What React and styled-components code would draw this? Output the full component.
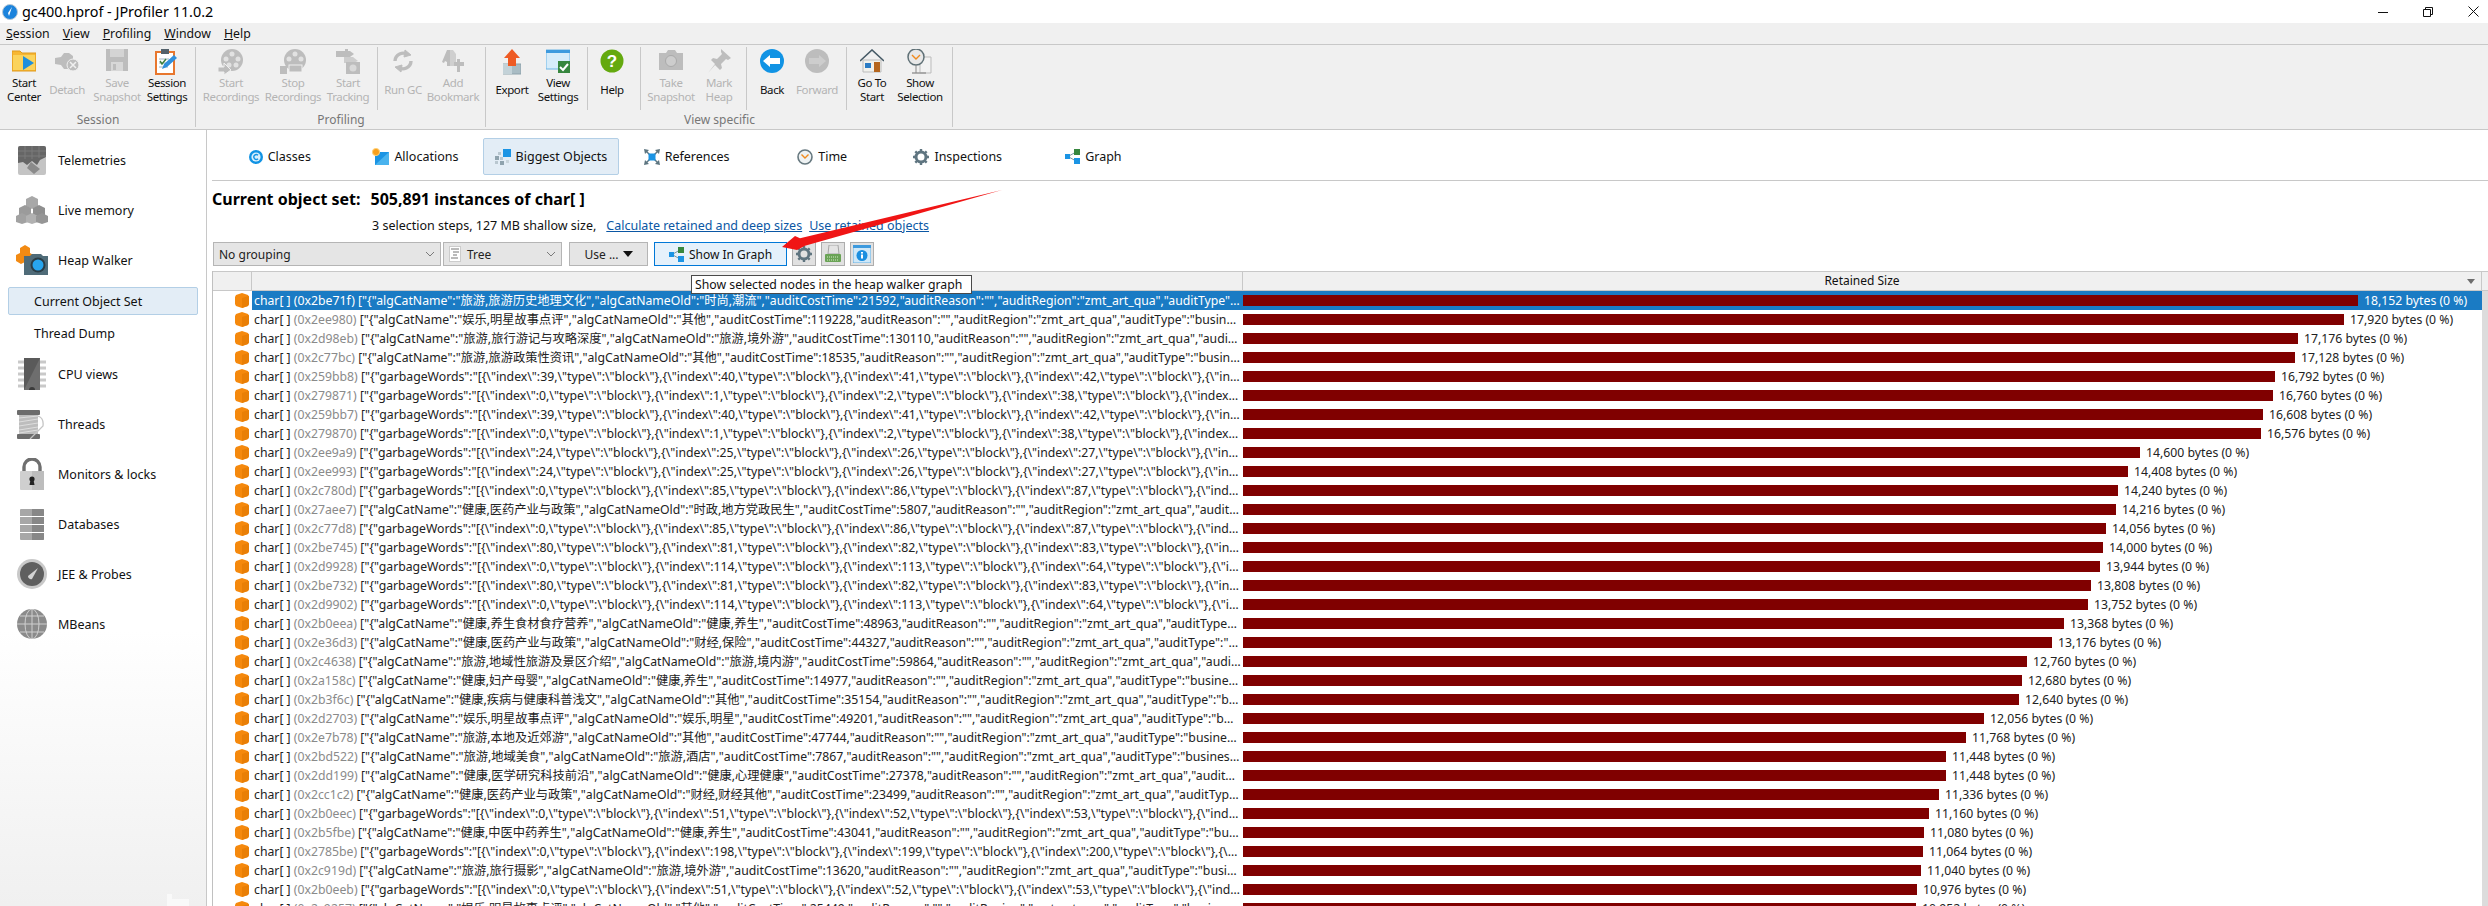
import React from 'react';
import styled, { createGlobalStyle } from 'styled-components';

const uiFont = `"Noto Sans", "Noto Sans CJK SC", sans-serif`;

const Global = createGlobalStyle`
  html, body {
    margin: 0;
    padding: 0;
    background: #fff;
    overflow: hidden;
  }
  * {
    box-sizing: border-box;
  }
`;

const Window = styled.div`
  position: relative;
  width: 2488px;
  height: 906px;
  overflow: hidden;
  display: flex;
  flex-direction: column;
  font-family: ${uiFont};
  font-size: 12px;
  color: #111;
`;

const TitleBar = styled.div`
  height: 23px;
  display: flex;
  align-items: center;
  padding-left: 2px;
  background: #fff;
`;

const TitleText = styled.span`
  margin-left: 4px;
  font-size: 14.4px;
  color: #000;
`;

const WindowControls = styled.div`
  margin-left: auto;
  display: flex;
  align-items: center;
  gap: 35px;
  padding-right: 9px;
`;

const MenuBar = styled.div`
  height: 22px;
  display: flex;
  align-items: center;
  gap: 13px;
  padding-left: 6px;
  background: #f0f0f0;
  border-bottom: 1px solid #c8c8c8;
  font-size: 12.3px;
`;

const MenuItem = styled.span`
  &::first-letter {
    text-decoration: underline;
  }
`;

const Toolbar = styled.div`
  height: 85px;
  display: flex;
  background: #f0f0f0;
  border-bottom: 1px solid #c8c8c8;
`;

const Group = styled.div`
  width: ${(p) => p.$w}px;
  height: 84px;
  padding-left: ${(p) => p.$pad || 0}px;
  display: flex;
  flex-direction: column;
  position: relative;
  &::after {
    content: '';
    position: absolute;
    right: 0;
    top: 2px;
    bottom: 2px;
    width: 1px;
    background: #c8c8c8;
  }
`;

const GroupRow = styled.div`
  height: 65px;
  padding-top: 2px;
  display: flex;
`;

const GroupLabel = styled.div`
  height: 19px;
  line-height: 19px;
  text-align: center;
  color: #777;
  margin-left: ${(p) => -(p.$pad || 0)}px;
`;

const InnerSep = styled.div`
  width: 1px;
  height: 63px;
  background: #c8c8c8;
  margin-left: ${(p) => p.$l}px;
  margin-right: ${(p) => p.$r}px;
`;

const ToolButton = styled.div`
  width: ${(p) => p.$w}px;
  display: flex;
  flex-direction: column;
  align-items: center;
  color: ${(p) => (p.$off ? '#b4b4b4' : '#111')};
`;

const ToolIcon = styled.div`
  height: 29px;
  padding-top: 2px;
  display: flex;
  justify-content: center;
`;

const ToolText = styled.div`
  height: 28px;
  display: flex;
  align-items: center;
  text-align: center;
  font-size: 11.5px;
  line-height: 14px;
  white-space: pre;
  letter-spacing: -0.4px;
`;

const Body = styled.div`
  flex: 1;
  display: flex;
  min-height: 0;
`;

const Sidebar = styled.div`
  position: relative;
  width: 207px;
  flex: none;
  padding-top: 5px;
  border-right: 1px solid #c8c8c8;
  background: linear-gradient(to bottom, #fff 0, #fff 500px, #f0f0f0 776px);
`;

const SideMark = styled.svg`
  position: absolute;
  left: 167px;
  bottom: 0;
`;

const SideItem = styled.div`
  height: 50px;
  display: flex;
  align-items: center;
  padding-left: 16px;
  gap: 10px;
  font-size: 12.5px;
`;

const SideIcon = styled.div`
  width: 32px;
  display: flex;
  justify-content: center;
`;

const SubList = styled.div`
  display: flex;
  flex-direction: column;
  gap: 4px;
  padding: 2px 0;
`;

const SubItem = styled.div`
  width: 190px;
  height: 28px;
  margin-left: 8px;
  padding-left: 25px;
  display: flex;
  align-items: center;
  font-size: 12.5px;
  border: 1px solid ${(p) => (p.$active ? '#b3cfe6' : 'transparent')};
  border-radius: 2px;
  background: ${(p) => (p.$active ? '#e3edf6' : 'transparent')};
`;

const Main = styled.div`
  flex: 1;
  min-width: 0;
  margin-left: 5px;
  display: flex;
  flex-direction: column;
`;

const TabBar = styled.div`
  height: 51px;
  padding-top: 8px;
  display: flex;
  border-bottom: 1px solid #c8c8c8;
`;

const Tab = styled.div`
  width: 135.6px;
  height: 37px;
  display: flex;
  align-items: center;
  justify-content: center;
  gap: 5px;
  font-size: 12.5px;
  border: 1px solid ${(p) => (p.$active ? '#b3cfe6' : 'transparent')};
  border-radius: 2px;
  background: ${(p) => (p.$active ? '#e3edf6' : 'transparent')};
`;

const Heading = styled.div`
  height: 22px;
  margin-top: 7px;
  display: flex;
  align-items: center;
  font-size: 16px;
  font-weight: 700;
  color: #000;
  gap: 10px;
`;

const SubLine = styled.div`
  height: 20px;
  margin-top: 5px;
  margin-left: 160px;
  display: flex;
  align-items: center;
  font-size: 12.5px;
`;

const DocLink = styled.span`
  color: #0b57a4;
  text-decoration: underline;
  margin-left: ${(p) => p.$l}px;
`;

const Controls = styled.div`
  height: 24px;
  margin-top: 7px;
  padding-left: 1px;
  display: flex;
  align-items: stretch;
`;

const Select = styled.div`
  width: ${(p) => p.$w}px;
  margin-right: ${(p) => p.$r}px;
  padding: 0 5px;
  display: flex;
  align-items: center;
  gap: 6px;
  background: #e5e5e5;
  border: 1px solid #b5b5b5;
  color: #222;
  & > svg:last-child {
    margin-left: auto;
  }
`;

const GraphButton = styled.div`
  width: 133px;
  margin-right: 5px;
  display: flex;
  align-items: center;
  justify-content: center;
  gap: 5px;
  background: #e5f1fb;
  border: 1px solid #0078d7;
`;

const IconButton = styled.div`
  width: 24px;
  margin-right: 5px;
  display: flex;
  align-items: center;
  justify-content: center;
  background: #e1e1e1;
  border: 1px solid #adadad;
`;

const UseButton = styled(Select)`
  justify-content: center;
  gap: 4px;
  & > svg:last-child {
    margin-left: 0;
  }
`;

const Table = styled.div`
  flex: 1;
  margin-top: 5px;
  border-left: 1px solid #c0c0c0;
  min-height: 0;
`;

const HeaderRow = styled.div`
  height: 20px;
  display: flex;
  background: #f0f0f0;
  border-top: 1px solid #c8c8c8;
  border-bottom: 1px solid #c8c8c8;
`;

const HeaderCell = styled.div`
  width: ${(p) => p.$w}px;
  flex: none;
  text-align: center;
  line-height: 18px;
  border-right: 1px solid #c8c8c8;
  display: flex;
  align-items: center;
  justify-content: center;
  position: relative;
`;

const SortMark = styled.span`
  position: absolute;
  right: 6px;
  top: 7px;
  width: 0;
  height: 0;
  border-left: 4px solid transparent;
  border-right: 4px solid transparent;
  border-top: 5px solid #6d6d6d;
`;

const Row = styled.div`
  height: 19px;
  display: flex;
  font-size: 12.25px;
  color: ${(p) => (p.$sel ? '#fff' : '#222')};
`;

const Gutter = styled.div`
  width: 39px;
  flex: none;
  padding-left: 22px;
  display: flex;
  align-items: center;
`;

const NameCell = styled.div`
  width: 991px;
  flex: none;
  padding: 0 2px;
  line-height: 19px;
  white-space: nowrap;
  overflow: hidden;
  text-overflow: ellipsis;
  background: ${(p) => (p.$sel ? '#1a7bc4' : 'transparent')};
`;

const Address = styled.span`
  color: ${(p) => (p.$sel ? '#fff' : '#8a8a8a')};
`;

const SizeCell = styled.div`
  width: 1239px;
  flex: none;
  display: flex;
  align-items: center;
  gap: 6px;
  background: ${(p) => (p.$sel ? '#1a7bc4' : 'transparent')};
`;

const Bar = styled.div`
  height: 11px;
  background: #800000;
`;

const Scroll = styled.div`
  width: 6px;
  background: #dcdcdc;
`;

const TableBody = styled.div`
  display: flex;
`;

const Rows = styled.div`
  flex: none;
`;

const Tooltip = styled.div`
  position: absolute;
  left: 691px;
  top: 275px;
  width: 281px;
  height: 19px;
  padding-left: 3px;
  font-size: 12.25px;
  line-height: 17px;
  background: #fff;
  border: 1px solid #4a4a4a;
  color: #111;
  white-space: nowrap;
`;

const ArrowLayer = styled.svg`
  position: absolute;
  left: 0;
  top: 0;
  pointer-events: none;
`;

const GRAY = '#bdbdbd';

const icons = {
  startCenter: (
    <svg width="24" height="24" viewBox="0 0 24 24">
      <path d="M0 2h8l2 2h14v18H0z" fill="#f7b733" stroke="#e09a1c" />
      <rect x="1" y="6" width="22" height="15" fill="#fbd35c" />
      <path d="M11 7l11 7-11 7z" fill="#1f8fdc" />
    </svg>
  ),
  detach: (
    <svg width="26" height="24" viewBox="0 0 26 24">
      <path d="M1 9l6-1 3-4h5l4 3v10l-5 3h-4l-3-4-6-1z" fill={GRAY} />
      <circle cx="19" cy="16" r="6" fill={GRAY} stroke="#f0f0f0" />
      <path d="M16 13l6 6M22 13l-6 6" stroke="#f0f0f0" strokeWidth="1.5" />
    </svg>
  ),
  save: (
    <svg width="22" height="22" viewBox="0 0 22 22">
      <path d="M0 0h22v22H0z" fill={GRAY} />
      <rect x="4" y="0" width="14" height="8" fill="#d4d4d4" />
      <rect x="5" y="13" width="12" height="9" fill="#d8d8d8" />
      <rect x="7" y="15" width="3" height="6" fill={GRAY} />
    </svg>
  ),
  sessionSettings: (
    <svg width="24" height="26" viewBox="0 0 24 26">
      <rect x="1" y="3" width="18" height="22" fill="#fff" stroke="#e8772e" strokeWidth="2" />
      <rect x="6" y="0" width="8" height="5" fill="#53616b" />
      <path d="M4 10h10M4 14h7M4 18h9" stroke="#9eb3c2" />
      <path d="M7 20l2-5 10-9 3 3-10 9z" fill="#2f8fdc" />
      <path d="M5 12l2 3 4-5" stroke="#3c7f3c" fill="none" strokeWidth="1.5" />
    </svg>
  ),
  reelStart: (
    <svg width="26" height="26" viewBox="0 0 26 26">
      <circle cx="14" cy="11" r="11" fill={GRAY} />
      <circle cx="14" cy="5" r="2.5" fill="#e2e2e2" />
      <circle cx="8" cy="10" r="2.5" fill="#e2e2e2" />
      <circle cx="20" cy="10" r="2.5" fill="#e2e2e2" />
      <circle cx="11" cy="16" r="2.5" fill="#e2e2e2" />
      <circle cx="18" cy="16" r="2.5" fill="#e2e2e2" />
      <path d="M0 18h6v-4l7 7-7 5v-3H0z" fill={GRAY} stroke="#f0f0f0" />
    </svg>
  ),
  reelStop: (
    <svg width="26" height="26" viewBox="0 0 26 26">
      <circle cx="15" cy="11" r="11" fill={GRAY} />
      <circle cx="15" cy="5" r="2.5" fill="#e2e2e2" />
      <circle cx="9" cy="10" r="2.5" fill="#e2e2e2" />
      <circle cx="21" cy="10" r="2.5" fill="#e2e2e2" />
      <rect x="0" y="17" width="7" height="8" fill={GRAY} />
      <rect x="9" y="16" width="13" height="7" fill={GRAY} stroke="#f0f0f0" />
    </svg>
  ),
  tracking: (
    <svg width="24" height="26" viewBox="0 0 24 26">
      <path d="M0 2h14l4 3-4 3H0z" fill={GRAY} />
      <rect x="9" y="0" width="3" height="10" fill={GRAY} />
      <path d="M8 8h9l5 4-5 2H8z" fill="#cdcdcd" />
      <rect x="10" y="13" width="14" height="12" fill={GRAY} />
      <circle cx="17" cy="19" r="3.5" fill="#d9d9d9" />
    </svg>
  ),
  gc: (
    <svg width="24" height="24" viewBox="0 0 24 24" fill="none" stroke={GRAY} strokeWidth="3.4">
      <path d="M4 12a8 8 0 0 1 13-6" />
      <path d="M20 12a8 8 0 0 1-13 6" />
      <path d="M14 1l6 5-7 2z" fill={GRAY} strokeWidth="1" />
      <path d="M10 23l-6-5 7-2z" fill={GRAY} strokeWidth="1" />
    </svg>
  ),
  bookmark: (
    <svg width="24" height="24" viewBox="0 0 24 24">
      <path d="M1 13l5-12h3l3 3v13H6v-4L4 12l-1 2z" fill={GRAY} />
      <path d="M9 1h3l3 4v12H9z" fill="#cfcfcf" />
      <path d="M13 13h3v-3h3v3h4v4h-4v6h-3v-6h-3z" fill={GRAY} />
    </svg>
  ),
  exportUp: (
    <svg width="18" height="26" viewBox="0 0 18 26">
      <rect x="0" y="15" width="18" height="10" fill="#a9bcc4" stroke="#8ea3ac" />
      <rect x="0" y="15" width="9" height="10" fill="#c3d2d8" />
      <path d="M9 0l8 9h-4v8H5V9H1z" fill="#ee5b24" />
    </svg>
  ),
  viewSettings: (
    <svg width="24" height="24" viewBox="0 0 24 24">
      <rect x="0" y="1" width="24" height="19" fill="#d6ecfa" stroke="#6ab4e4" />
      <rect x="0" y="1" width="24" height="3" fill="#3d9ade" />
      <rect x="12" y="12" width="12" height="12" fill="#37873f" />
      <path d="M14 18l3 3 5-6" stroke="#fff" strokeWidth="2" fill="none" />
    </svg>
  ),
  help: (
    <svg width="24" height="24" viewBox="0 0 24 24">
      <circle cx="12" cy="12" r="11.5" fill="#64a90f" />
      <text x="12" y="18" textAnchor="middle" fontSize="17" fontWeight="700" fill="#fff" fontFamily="Liberation Sans">?</text>
    </svg>
  ),
  snapshot: (
    <svg width="24" height="22" viewBox="0 0 24 22">
      <path d="M0 4h7l2-3h7l2 3h6v17H0z" fill={GRAY} />
      <circle cx="12" cy="12" r="5.5" fill="#cdcdcd" stroke="#aaa" />
    </svg>
  ),
  pin: (
    <svg width="24" height="24" viewBox="0 0 24 24">
      <path d="M14 0l10 9-3 2-2-1-5 5 1 4-2 2-5-5-7 8 7-9-4-4 2-2 4 1 5-5-1-2z" fill={GRAY} />
    </svg>
  ),
  back: (
    <svg width="24" height="24" viewBox="0 0 24 24">
      <circle cx="12" cy="12" r="12" fill="#1193e4" />
      <path d="M3 12l7-6v3h10v6H10v3z" fill="#fff" />
    </svg>
  ),
  forward: (
    <svg width="24" height="24" viewBox="0 0 24 24">
      <circle cx="12" cy="12" r="12" fill={GRAY} />
      <path d="M21 12l-7-6v3H4v6h10v3z" fill="#cdcdcd" />
    </svg>
  ),
  home: (
    <svg width="24" height="24" viewBox="0 0 24 24">
      <path d="M3 11h18v12H3z" fill="#f1f1ec" stroke="#bbb" />
      <path d="M0 12L12 1l12 11" fill="none" stroke="#465a66" strokeWidth="1.6" />
      <rect x="14" y="13" width="6" height="10" fill="#b5651d" />
      <rect x="5" y="14" width="6" height="5" fill="#2b7bc4" />
    </svg>
  ),
  selection: (
    <svg width="26" height="26" viewBox="0 0 26 26">
      <path d="M13 8h11v16H13z" fill="#f2f2f2" stroke="#bbb" />
      <path d="M5 24h14" stroke="#9a9a9a" strokeWidth="1.5" />
      <circle cx="9" cy="8" r="8" fill="#e8e8e8" stroke="#5f7076" strokeWidth="1.5" />
      <path d="M5 6l4 4 4-4" fill="none" stroke="#f08a1d" strokeWidth="1.4" />
      <path d="M9 16v8" stroke="#8a8a8a" />
    </svg>
  ),
  telemetries: (
    <svg width="28" height="29" viewBox="0 0 28 29">
      <rect width="28" height="29" rx="2" fill="#c4c4c4" />
      <path d="M0 2a2 2 0 0 1 2-2h24a2 2 0 0 1 2 2v9l-6 3-3 5-5-4-5 4-4-3-5 1z" fill="#666" />
      <path d="M0 5h28M0 10h28M7 0v13M14 0v13M21 0v12" stroke="#7b7b7b" />
      <path d="M13 16l9 7-6 5-7-6z" fill="#8a8a8a" />
    </svg>
  ),
  live: (
    <svg width="32" height="28" viewBox="0 0 32 28">
      <path d="M16 0l6 3v7l-6 3-6-3V3z" fill="#a8a8a8" />
      <path d="M9 9l6 3v7l-6 3-6-3v-7z" fill="#9b9b9b" />
      <path d="M23 9l6 3v7l-6 3-6-3v-7z" fill="#8f8f8f" />
      <path d="M6 17l6 3v6l-6 2-6-2v-6z" fill="#a2a2a2" />
      <path d="M16 17l6 3v6l-6 2-6-2v-6z" fill="#b1b1b1" />
      <path d="M26 17l6 3v6l-6 2-6-2v-6z" fill="#969696" />
    </svg>
  ),
  heap: (
    <svg width="32" height="30" viewBox="0 0 32 30">
      <path d="M9 0l5 3v5l5 3v6l-5 3-5-3-4 2-5-3v-6l4-2V3z" fill="#f28a13" />
      <path d="M8 11h6l2-2h9l2 2h5v19H8z" fill="#4f6b78" />
      <circle cx="22" cy="20" r="7.5" fill="#2b3d46" />
      <circle cx="22" cy="20" r="5.5" fill="#28a5ee" />
    </svg>
  ),
  cpu: (
    <svg width="28" height="32" viewBox="0 0 28 32">
      <path d="M0 4h28M0 10h28M0 16h28M0 22h28M0 28h28" stroke="#c9c9c9" strokeWidth="3" />
      <rect x="6" y="0" width="16" height="32" fill="#5a5a5a" />
      <path d="M22 0v32H6z" fill="#6e6e6e" />
      <path d="M11 32a3 3 0 0 1 6 0z" fill="#3b3b3b" />
    </svg>
  ),
  threads: (
    <svg width="30" height="29" viewBox="0 0 30 29">
      <rect x="0" y="0" width="23" height="5" rx="1" fill="#6c6c6c" />
      <rect x="0" y="24" width="23" height="5" rx="1" fill="#6c6c6c" />
      <rect x="2" y="5" width="19" height="19" fill="#bdbdbd" />
      <path d="M2 8l19-2M2 12l19-3M2 16l19-3M2 20l19-3M2 23l19-3" stroke="#dedede" />
      <path d="M21 6q6 2 5 10L13 29" fill="none" stroke="#c5c5c5" strokeWidth="1.3" />
    </svg>
  ),
  lock: (
    <svg width="26" height="32" viewBox="0 0 26 32">
      <path d="M5 14V9a8 8 0 0 1 16 0v5" fill="none" stroke="#6f6f6f" strokeWidth="3.4" />
      <rect x="1" y="13" width="24" height="19" rx="1" fill="#cfcfcf" />
      <path d="M13 13h12v19H13z" fill="#bdbdbd" />
      <circle cx="13" cy="21" r="2.6" fill="#222" />
      <path d="M11.5 22h3l1 5h-5z" fill="#222" />
    </svg>
  ),
  db: (
    <svg width="24" height="31" viewBox="0 0 24 31">
      <path d="M0 1a1 1 0 0 1 1-1h22a1 1 0 0 1 1 1v6H0zM0 8h24v7H0zM0 16h24v7H0zM0 24h24v6a1 1 0 0 1-1 1H1a1 1 0 0 1-1-1z" fill="#a7a7a7" />
      <path d="M12 0h11a1 1 0 0 1 1 1v6H12zM12 8h12v7H12zM12 16h12v7H12zM12 24h12v6a1 1 0 0 1-1 1H12z" fill="#878787" />
    </svg>
  ),
  gauge: (
    <svg width="30" height="30" viewBox="0 0 30 30">
      <circle cx="15" cy="15" r="15" fill="#c9c9c9" />
      <circle cx="15" cy="15" r="12" fill="#5f5f5f" />
      <path d="M11 17l10-8-6 11a3 3 0 0 1-4-3z" fill="#d2d2d2" />
    </svg>
  ),
  globe: (
    <svg width="30" height="30" viewBox="0 0 30 30" fill="none" stroke="#cfcfcf">
      <circle cx="15" cy="15" r="15" fill="#8b8b8b" stroke="none" />
      <ellipse cx="15" cy="15" rx="7" ry="15" />
      <path d="M15 0v30M0 15h30M3 7h24M3 23h24" />
    </svg>
  ),
  classes: (
    <svg width="14" height="14" viewBox="0 0 14 14">
      <circle cx="7" cy="7" r="7" fill="#1193e4" />
      <circle cx="7" cy="7" r="4.6" fill="#d9effc" />
      <path d="M9 5.3a2.4 2.4 0 1 0 0 3.4" fill="none" stroke="#1193e4" strokeWidth="1.4" />
    </svg>
  ),
  allocations: (
    <svg width="17" height="17" viewBox="0 0 17 17">
      <rect x="3" y="4" width="14" height="13" fill="#1b94e4" />
      <path d="M17 4v13H3z" fill="#49b3ee" />
      <circle cx="4" cy="4" r="3.6" fill="#f8a01e" stroke="#ffd27a" />
    </svg>
  ),
  biggest: (
    <svg width="16" height="16" viewBox="0 0 16 16">
      <rect x="8" y="0" width="8" height="8" fill="#1b94e4" />
      <rect x="3" y="3" width="3" height="3" fill="#b9c7d0" />
      <rect x="0" y="7" width="4" height="4" fill="#8fa3ae" />
      <rect x="5" y="8" width="3" height="3" fill="#b9c7d0" />
      <rect x="0" y="12" width="3" height="3" fill="#b9c7d0" />
      <rect x="5" y="12" width="4" height="4" fill="#8fa3ae" />
      <rect x="11" y="11" width="3" height="3" fill="#c9d5dc" />
    </svg>
  ),
  references: (
    <svg width="16" height="16" viewBox="0 0 16 16">
      <path d="M0 0l5 1-1.500 1.500L6 5 5 6 2.500 3.500 1 5zM16 0l-1 5-1.500-1.500L11 6l-1-1 2.500-2.500L11 1zM0 16l1-5 1.500 1.500L5 10l1 1-2.500 2.500L5 15zM16 16l-5-1 1.500-1.500L10 11l1-1 2.500 2.500L15 11z" fill="#5d7580" />
      <rect x="4.500" y="4.500" width="7" height="7" fill="#1b94e4" />
    </svg>
  ),
  time: (
    <svg width="16" height="16" viewBox="0 0 16 16">
      <circle cx="8" cy="8" r="7" fill="#eef2f3" stroke="#66787f" strokeWidth="1.6" />
      <path d="M4.500 5.500L8 9l3.500-3.500" fill="none" stroke="#f08a1d" strokeWidth="1.4" />
    </svg>
  ),
  gear: (
    <svg width="16" height="16" viewBox="0 0 16 16">
      <circle cx="8" cy="8" r="5" fill="none" stroke="#5f7580" strokeWidth="3" />
      <path d="M8 0v3M8 13v3M0 8h3M13 8h3M2.300 2.300l2.200 2.200M11.500 11.500l2.200 2.200M13.700 2.300l-2.200 2.200M4.500 11.500l-2.200 2.200" stroke="#5f7580" strokeWidth="2.400" />
    </svg>
  ),
  graph: (
    <svg width="15" height="15" viewBox="0 0 15 15">
      <path d="M3 7.500L11 3M3 7.500L11 12" stroke="#7b949f" />
      <rect x="0" y="5" width="5" height="5" fill="#1b94e4" />
      <rect x="9" y="0" width="6" height="6" fill="#37873f" />
      <rect x="9" y="9" width="6" height="6" fill="#1b94e4" />
    </svg>
  ),
  print: (
    <svg width="18" height="18" viewBox="0 0 18 18">
      <path d="M5 0h9l1 9H4z" fill="#e4e4e4" stroke="#a5a5a5" />
      <rect x="1" y="9" width="16" height="8" rx="1" fill="#6aa356" />
      <path d="M3 12h12M3 15h12" stroke="#d3ecc6" strokeDasharray="1 1" />
    </svg>
  ),
  info: (
    <svg width="18" height="18" viewBox="0 0 18 18">
      <rect x="0" y="0" width="18" height="18" fill="#cfe8f8" stroke="#63aee0" />
      <rect x="0" y="0" width="18" height="3" fill="#3d9ade" />
      <circle cx="9" cy="10.500" r="5.500" fill="#1b8fe0" />
      <rect x="8" y="9.500" width="2" height="4" fill="#fff" />
      <rect x="8" y="7" width="2" height="1.600" fill="#fff" />
    </svg>
  ),
};

const ObjectIcon = () => (
  <svg width="14" height="15" viewBox="0 0 14 15">
    <path d="M7 0l6 2 1 2v7l-1 2-6 2-6-2-1-2V4l1-2z" fill="#f5890d" />
    <path d="M7 5l7-2v8l-1 2-6 2z" fill="#e97f06" />
  </svg>
);

const Chevron = () => (
  <svg width="10" height="6" viewBox="0 0 10 6" fill="none" stroke="#7a7a7a">
    <path d="M1 1l4 4 4-4" />
  </svg>
);

const Caret = () => (
  <svg width="10" height="6" viewBox="0 0 10 6">
    <path d="M0 0h10L5 6z" fill="#111" />
  </svg>
);

const TreeGlyph = () => (
  <svg width="12" height="16" viewBox="0 0 12 16" fill="none" stroke="#777">
    <rect x="0.500" y="0.500" width="11" height="15" fill="#fff" stroke="#ccc" />
    <path d="M2 3h8M4 6h6M4 9h4M2 12h7" />
  </svg>
);

const groups = [
  {
    label: 'Session',
    w: 196,
    pad: 1,
    parts: [
      { w: 46, text: 'Start\nCenter', icon: 'startCenter' },
      { w: 40, text: 'Detach', icon: 'detach', off: true },
      { w: 60, text: 'Save\nSnapshot', icon: 'save', off: true },
      { w: 40, text: 'Session\nSettings', icon: 'sessionSettings' },
    ],
  },
  {
    label: 'Profiling',
    w: 290,
    pad: 4,
    parts: [
      { w: 62, text: 'Start\nRecordings', icon: 'reelStart', off: true },
      { w: 62, text: 'Stop\nRecordings', icon: 'reelStop', off: true },
      { w: 48, text: 'Start\nTracking', icon: 'tracking', off: true },
      { sep: [5, 2] },
      { w: 46, text: 'Run GC', icon: 'gc', off: true },
      { w: 54, text: 'Add\nBookmark', icon: 'bookmark', off: true },
    ],
  },
  {
    label: 'View specific',
    w: 467,
    pad: 0,
    parts: [
      { w: 52, text: 'Export', icon: 'exportUp' },
      { w: 40, text: 'View\nSettings', icon: 'viewSettings' },
      { sep: [9, 1] },
      { w: 46, text: 'Help', icon: 'help' },
      { sep: [5, 1] },
      { w: 58, text: 'Take\nSnapshot', icon: 'snapshot', off: true },
      { w: 38, text: 'Mark\nHeap', icon: 'pin', off: true },
      { sep: [8, 1] },
      { w: 48, text: 'Back', icon: 'back' },
      { w: 42, text: 'Forward', icon: 'forward', off: true },
      { sep: [8, 1] },
      { w: 48, text: 'Go To\nStart', icon: 'home' },
      { w: 48, text: 'Show\nSelection', icon: 'selection' },
    ],
  },
];

const sideTop = [
  ['telemetries', 'Telemetries'],
  ['live', 'Live memory'],
  ['heap', 'Heap Walker'],
];

const sideBottom = [
  ['cpu', 'CPU views'],
  ['threads', 'Threads'],
  ['lock', 'Monitors & locks'],
  ['db', 'Databases'],
  ['gauge', 'JEE & Probes'],
  ['globe', 'MBeans'],
];

const tabs = [
  ['classes', 'Classes'],
  ['allocations', 'Allocations'],
  ['biggest', 'Biggest Objects', true],
  ['references', 'References'],
  ['time', 'Time'],
  ['gear', 'Inspections'],
  ['graph', 'Graph'],
];

const alg = (cat, old, time) =>
  `["{"algCatName":"${cat}","algCatNameOld":"${old}","auditCostTime":${time},"auditReason":"","auditRegion":"zmt_art_qua","auditType":"business","auditUser":"zmt"}`;

const garbage = (a, b, c, d) =>
  `["{"garbageWords":"[` +
  [a, b, c, d, 0, 0].map((i) => `{\\"index\\":${i},\\"type\\":\\"block\\"}`).join(',');

const rows = [
  ['0x2be71f', alg('旅游,旅游历史地理文化', '时尚,潮流', 21592), 18152],
  ['0x2ee980', alg('娱乐,明星故事点评', '其他', 119228), 17920],
  ['0x2d98eb', alg('旅游,旅行游记与攻略深度', '旅游,境外游', 130110), 17176],
  ['0x2c77bc', alg('旅游,旅游政策性资讯', '其他', 18535), 17128],
  ['0x259bb8', garbage(39, 40, 41, 42), 16792],
  ['0x279871', garbage(0, 1, 2, 38), 16760],
  ['0x259bb7', garbage(39, 40, 41, 42), 16608],
  ['0x279870', garbage(0, 1, 2, 38), 16576],
  ['0x2ee9a9', garbage(24, 25, 26, 27), 14600],
  ['0x2ee993', garbage(24, 25, 26, 27), 14408],
  ['0x2c780d', garbage(0, 85, 86, 87), 14240],
  ['0x27aee7', alg('健康,医药产业与政策', '时政,地方党政民生', 5807), 14216],
  ['0x2c77d8', garbage(0, 85, 86, 87), 14056],
  ['0x2be745', garbage(80, 81, 82, 83), 14000],
  ['0x2d9928', garbage(0, 114, 113, 64), 13944],
  ['0x2be732', garbage(80, 81, 82, 83), 13808],
  ['0x2d9902', garbage(0, 114, 113, 64), 13752],
  ['0x2b0eea', alg('健康,养生食材食疗营养', '健康,养生', 48963), 13368],
  ['0x2e36d3', alg('健康,医药产业与政策', '财经,保险', 44327), 13176],
  ['0x2c4638', alg('旅游,地域性旅游及景区介绍', '旅游,境内游', 59864), 12760],
  ['0x2a158c', alg('健康,妇产母婴', '健康,养生', 14977), 12680],
  ['0x2b3f6c', alg('健康,疾病与健康科普浅文', '其他', 35154), 12640],
  ['0x2d2703', alg('娱乐,明星故事点评', '娱乐,明星', 49201), 12056],
  ['0x2e7b78', alg('旅游,本地及近郊游', '其他', 47744), 11768],
  ['0x2bd522', alg('旅游,地域美食', '旅游,酒店', 7867), 11448],
  ['0x2dd199', alg('健康,医学研究科技前沿', '健康,心理健康', 27378), 11448],
  ['0x2cc1c2', alg('健康,医药产业与政策', '财经,财经其他', 23499), 11336],
  ['0x2b0eec', garbage(0, 51, 52, 53), 11160],
  ['0x2b5fbe', alg('健康,中医中药养生', '健康,养生', 43041), 11080],
  ['0x2785be', garbage(0, 198, 199, 200), 11064],
  ['0x2c919d', alg('旅游,旅行摄影', '旅游,境外游', 13620), 11040],
  ['0x2b0eeb', garbage(0, 51, 52, 53), 10976],
  ['0x2c9257', alg('娱乐,明星故事点评', '其他', 25449), 10952],
];

export default function App() {
  return (
    <Window>
      <Global />
      <TitleBar>
        <svg width="16" height="16" viewBox="0 0 16 16">
          <circle cx="8" cy="8" r="7.500" fill="#1b83dc" stroke="#b9c9d6" />
          <path d="M10 3L7 12 6 9z" fill="#fff" />
        </svg>
        <TitleText>gc400.hprof - JProfiler 11.0.2</TitleText>
        <WindowControls>
          <svg width="10" height="10" viewBox="0 0 10 10">
            <path d="M0 5.500h10" stroke="#111" />
          </svg>
          <svg width="10" height="10" viewBox="0 0 10 10" fill="none" stroke="#111">
            <path d="M2.500 2.500v-2h7v7h-2M.5 2.500h7v7h-7z" />
          </svg>
          <svg width="11" height="11" viewBox="0 0 11 11" stroke="#111">
            <path d="M.5.500l10 10M10.500.500l-10 10" />
          </svg>
        </WindowControls>
      </TitleBar>
      <MenuBar>
        {['Session', 'View', 'Profiling', 'Window', 'Help'].map((m) => (
          <MenuItem key={m}>{m}</MenuItem>
        ))}
      </MenuBar>
      <Toolbar>
        {groups.map((g) => (
          <Group key={g.label} $w={g.w} $pad={g.pad}>
            <GroupRow>
              {g.parts.map((p, i) =>
                p.sep ? (
                  <InnerSep key={i} $l={p.sep[0]} $r={p.sep[1]} />
                ) : (
                  <ToolButton key={i} $w={p.w} $off={p.off}>
                    <ToolIcon>{icons[p.icon]}</ToolIcon>
                    <ToolText>{p.text}</ToolText>
                  </ToolButton>
                )
              )}
            </GroupRow>
            <GroupLabel $pad={g.pad}>{g.label}</GroupLabel>
          </Group>
        ))}
      </Toolbar>
      <Body>
        <Sidebar>
          {sideTop.map(([icon, text]) => (
            <SideItem key={text}>
              <SideIcon>{icons[icon]}</SideIcon>
              {text}
            </SideItem>
          ))}
          <SubList>
            <SubItem $active>Current Object Set</SubItem>
            <SubItem>Thread Dump</SubItem>
          </SubList>
          {sideBottom.map(([icon, text]) => (
            <SideItem key={text}>
              <SideIcon>{icons[icon]}</SideIcon>
              {text}
            </SideItem>
          ))}
          <SideMark width="23" height="12" viewBox="0 0 23 12">
            <path d="M0 0h5v5h17v7H0z" fill="#f9f9f9" />
          </SideMark>
        </Sidebar>
        <Main>
          <TabBar>
            {tabs.map(([icon, text, active]) => (
              <Tab key={text} $active={active}>
                {icons[icon]}
                {text}
              </Tab>
            ))}
          </TabBar>
          <Heading>
            <span>Current object set:</span>
            <span>505,891 instances of char[ ]</span>
          </Heading>
          <SubLine>
            3 selection steps, 127 MB shallow size,
            <DocLink $l={10}>Calculate retained and deep sizes</DocLink>
            <DocLink $l={7}>Use retained objects</DocLink>
          </SubLine>
          <Controls>
            <Select $w={228} $r={2}>
              No grouping
              <Chevron />
            </Select>
            <Select $w={119} $r={7}>
              <TreeGlyph />
              Tree
              <Chevron />
            </Select>
            <UseButton $w={79} $r={6}>
              Use ...
              <Caret />
            </UseButton>
            <GraphButton>
              {icons.graph}
              Show In Graph
            </GraphButton>
            <IconButton>{icons.gear}</IconButton>
            <IconButton>{icons.print}</IconButton>
            <IconButton>{icons.info}</IconButton>
          </Controls>
          <Table>
            <HeaderRow>
              <HeaderCell $w={39} />
              <HeaderCell $w={991} />
              <HeaderCell $w={1239}>
                Retained Size
                <SortMark />
              </HeaderCell>
            </HeaderRow>
            <TableBody>
              <Rows>
                {rows.map(([addr, text, bytes], i) => (
                  <Row key={addr} $sel={i === 0}>
                    <Gutter>
                      <ObjectIcon />
                    </Gutter>
                    <NameCell $sel={i === 0}>
                      char[ ] <Address $sel={i === 0}>({addr})</Address> {text}
                    </NameCell>
                    <SizeCell $sel={i === 0}>
                      <Bar style={{ width: Math.round(bytes * 0.06143) }} />
                      {bytes.toLocaleString('en-US')} bytes (0 %)
                    </SizeCell>
                  </Row>
                ))}
              </Rows>
              <Scroll />
            </TableBody>
          </Table>
        </Main>
      </Body>
      <Tooltip>Show selected nodes in the heap walker graph</Tooltip>
      <ArrowLayer width="2488" height="906">
        <path d="M1002 190L800 238.300 795 236 782 247 797 250 805 245.700z" fill="#f01515" />
      </ArrowLayer>
    </Window>
  );
}
